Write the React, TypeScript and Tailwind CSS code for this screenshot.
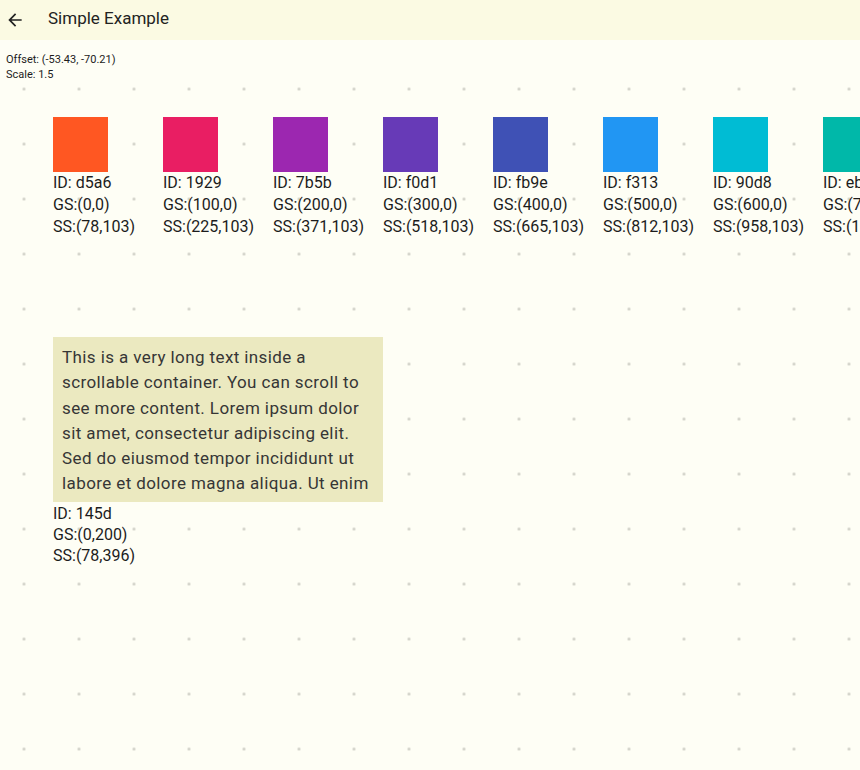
import { MdArrowBack } from "react-icons/md";

const nodes = [
  { id: "d5a6", gs: "(0,0)", ss: "(78,103)", color: "bg-[#ff5722]" },
  { id: "1929", gs: "(100,0)", ss: "(225,103)", color: "bg-[#e91e63]" },
  { id: "7b5b", gs: "(200,0)", ss: "(371,103)", color: "bg-[#9c27b0]" },
  { id: "f0d1", gs: "(300,0)", ss: "(518,103)", color: "bg-[#673ab7]" },
  { id: "fb9e", gs: "(400,0)", ss: "(665,103)", color: "bg-[#3f51b5]" },
  { id: "f313", gs: "(500,0)", ss: "(812,103)", color: "bg-[#2196f3]" },
  { id: "90d8", gs: "(600,0)", ss: "(958,103)", color: "bg-[#00bcd4]" },
  { id: "eb3c", gs: "(700,0)", ss: "(1105,103)", color: "bg-[#00b8a9]" },
];

const font = { fontFamily: "Roboto, 'Noto Sans', sans-serif" };

export default function App() {
  return (
    <div className="w-[860px] h-[770px] overflow-hidden bg-[#fefef5] text-[#1c1c1c]" style={font}>
      <header className="h-[40px] flex items-center bg-[#fbfae3]">
        <div className="w-[48px] pl-[5px]">
          <MdArrowBack size={20} className="text-[#222]" />
        </div>
        <h1 className="text-[17px] text-[#222] -mt-[2px]">Simple Example</h1>
      </header>

      <div className="relative h-[730px]">
        <svg className="absolute inset-0" width="860" height="730">
          <defs>
            <pattern id="grid" x="-3.5" y="21.5" width="55" height="55" patternUnits="userSpaceOnUse">
              <circle cx="27.5" cy="27.5" r="1.5" fill="#cfcfc6" />
            </pattern>
          </defs>
          <rect width="860" height="730" fill="url(#grid)" />
        </svg>

        <div className="relative pl-[6px] pt-[12px] text-[11px] leading-[15px]">
          <p>Offset: (-53.43, -70.21)</p>
          <p>Scale: 1.5</p>
        </div>

        {nodes.map((n, i) => (
          <div
            key={n.id}
            className="absolute top-[77px] text-[16px] leading-[22px] whitespace-nowrap"
            style={{ left: 53 + i * 110 }}
          >
            <div className={`w-[55px] h-[55px] ${n.color}`} />
            <p>ID: {n.id}</p>
            <p>GS:{n.gs}</p>
            <p>SS:{n.ss}</p>
          </div>
        ))}

        <div className="absolute left-[53px] top-[297px] text-[16px] leading-[21px] whitespace-nowrap">
          <div className="w-[330px] h-[165px] overflow-hidden bg-[#ebe9c0] px-[9px] pt-[8px] text-[17px] leading-[25.3px] tracking-[0.4px] text-[#363636] whitespace-normal">
            This is a very long text inside a scrollable container. You can scroll to see more content. Lorem ipsum dolor sit amet, consectetur adipiscing elit. Sed do eiusmod tempor incididunt ut labore et dolore magna aliqua. Ut enim ad minim veniam, quis nostrud exercitation ullamco laboris nisi ut aliquip ex ea commodo consequat.
          </div>
          <p className="mt-[1px]">ID: 145d</p>
          <p>GS:(0,200)</p>
          <p>SS:(78,396)</p>
        </div>
      </div>
    </div>
  );
}
